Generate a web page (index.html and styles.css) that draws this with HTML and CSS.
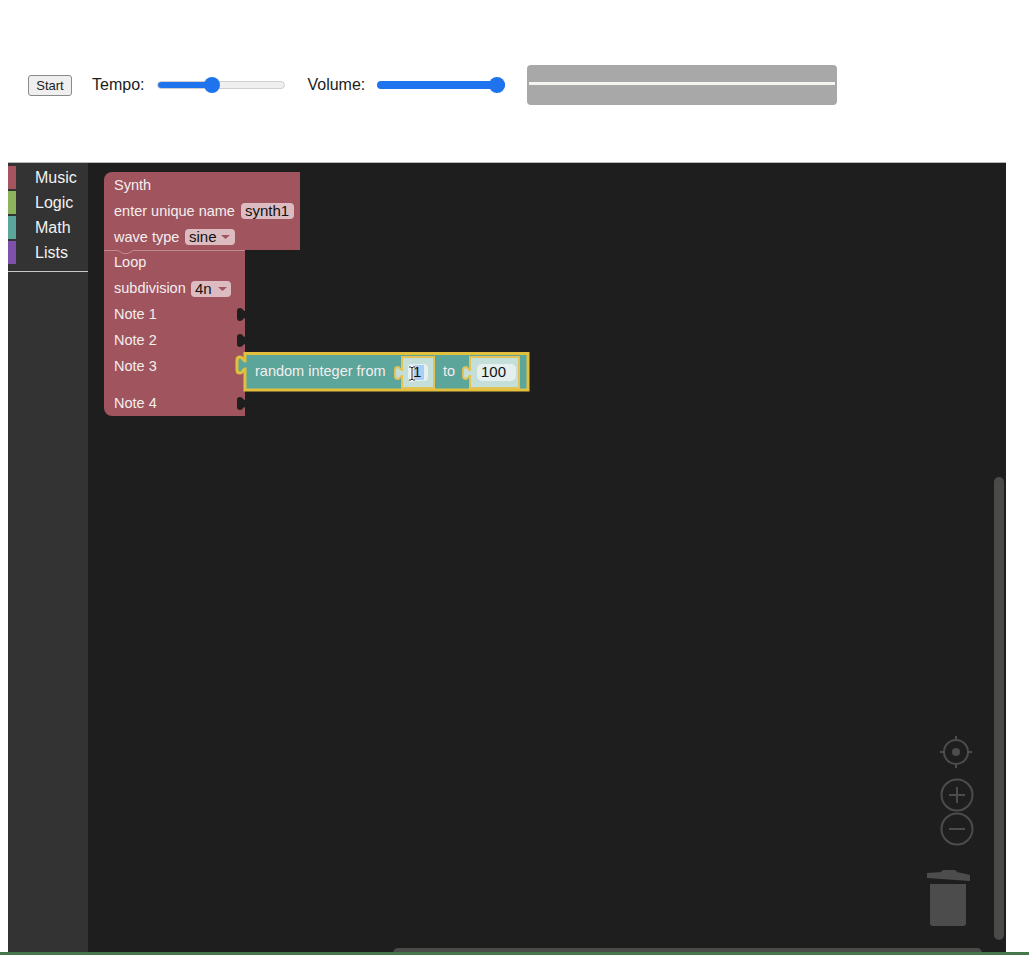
FILE: index.html
```html
<!DOCTYPE html>
<html lang="en">
<head>
    <meta charset="UTF-8">
    <meta name="viewport" content="width=device-width, initial-scale=1.0">
    <title>Music Blocks</title>
    <link rel="stylesheet" href="styles.css">
</head>
<body>
    <div class="controls">
        <button class="start">Start</button>
        <label class="control-label tempo-label" for="tempo">Tempo:</label>
        <input class="slider tempo-slider" type="range" id="tempo" value="41" min="0" max="100">
        <label class="control-label volume-label" for="volume">Volume:</label>
        <input class="slider volume-slider" type="range" id="volume" value="100" min="0" max="100">
        <div class="scope"><div class="scope-line"></div></div>
    </div>

    <div class="workspace">
        <div class="toolbox">
            <div class="category"><span class="swatch music"></span>Music</div>
            <div class="category"><span class="swatch logic"></span>Logic</div>
            <div class="category"><span class="swatch math"></span>Math</div>
            <div class="category"><span class="swatch lists"></span>Lists</div>
            <div class="separator"></div>
        </div>

        <!-- viewBox uses page coordinates so the blocks are easy to line up -->
        <svg class="canvas" viewBox="88 163 918 789">
            <!-- Synth block -->
            <path class="block-music" d="M104 180a8 8 0 0 1 8-8H300V250H104Z"/>
            <text class="block-text" x="114" y="190">Synth</text>
            <text class="block-text" x="114" y="216">enter unique name</text>
            <rect class="field-music" x="241" y="203" width="53" height="16" rx="4"/>
            <text class="field-text" x="245" y="216">synth1</text>
            <text class="block-text" x="114" y="242">wave type</text>
            <rect class="field-music" x="185" y="229" width="50" height="16" rx="4"/>
            <text class="field-text" x="189" y="242">sine</text>
            <path class="arrow" d="M221 235h9l-4.500 4Z"/>

            <!-- Loop block -->
            <path class="block-music" d="M104 250H245V416H112a8 8 0 0 1-8-8Z"/>
            <path class="block-edge" d="M104 250.500H118l5 3h5l5-3H245"/>
            <text class="block-text" x="114" y="267">Loop</text>
            <text class="block-text" x="114" y="293">subdivision</text>
            <rect class="field-music" x="191" y="281" width="40" height="16" rx="4"/>
            <text class="field-text" x="195" y="294">4n</text>
            <path class="arrow" d="M218 287h9l-4.500 4Z"/>
            <text class="block-text" x="114" y="319">Note 1</text>
            <text class="block-text" x="114" y="345">Note 2</text>
            <text class="block-text" x="114" y="371">Note 3</text>
            <text class="block-text" x="114" y="408">Note 4</text>
            <path class="tab-shadow" d="M245 311C243 311 243 308 240 308Q237 308 237 311V318Q237 321 240 321C243 321 243 318 245 318Z"/>
            <path class="tab-shadow" d="M245 337C243 337 243 334 240 334Q237 334 237 337V344Q237 347 240 347C243 347 243 344 245 344Z"/>
            <path class="tab-shadow" d="M245 400C243 400 243 397 240 397Q237 397 237 400V407Q237 410 240 410C243 410 243 407 245 407Z"/>

            <!-- random integer block, selected -->
            <path class="block-math" d="M245 353.500H528V390H245V369C243 369 243 373 240 373Q237 373 237 370V360Q237 357 240 357C243 357 243 361 245 361Z"/>
            <text class="block-text" x="255" y="376">random integer from</text>
            <text class="block-text" x="443" y="376">to</text>

            <path class="input-math" d="M402 357H434V388H402V376C400 376 400 379 398 379Q395 379 395 376V370Q395 367 398 367C400 367 400 370 402 370Z"/>
            <rect class="field-math" x="408" y="364" width="20" height="17" rx="4"/>
            <rect class="selection" x="412" y="365" width="12" height="15"/>
            <text class="field-text" x="413" y="377">1</text>
            <path class="ibeam-halo" d="M409 367h2l1 1 1-1h2M412 368v11M409 380h2l1-1 1 1h2"/>
            <path class="ibeam" d="M409 367h2l1 1 1-1h2M412 368v11M409 380h2l1-1 1 1h2"/>

            <path class="input-math" d="M470 357H519V388H470V376C468 376 468 379 466 379Q463 379 463 376V370Q463 367 466 367C468 367 468 370 470 370Z"/>
            <rect class="field-math" x="477" y="364" width="39" height="17" rx="5"/>
            <text class="field-text" x="481" y="377">100</text>

            <!-- workspace controls -->
            <circle class="control-stroke" cx="956" cy="752" r="12"/>
            <circle class="control-fill" cx="956" cy="752" r="4"/>
            <path class="control-stroke" d="M956 736v5M956 763v5M940 752h5M967 752h5"/>
            <circle class="control-stroke" cx="957" cy="795" r="15.500"/>
            <path class="control-stroke" d="M949 795h16M957 787v16"/>
            <circle class="control-stroke" cx="957" cy="829" r="15.500"/>
            <path class="control-stroke" d="M949 829h16"/>
            <path class="control-fill" d="M927 873 941 872a3 3 0 0 1 3-2h10a3 3 0 0 1 3 2L970 875V881L927 878Z"/>
            <path class="control-fill" d="M930 884H966V923a3 3 0 0 1-3 3H933a3 3 0 0 1-3-3Z"/>

            <!-- scrollbars -->
            <rect class="scrollbar" x="994" y="477" width="10" height="463" rx="5"/>
            <rect class="scrollbar" x="393" y="948" width="589" height="10" rx="5"/>
        </svg>
    </div>

    <div class="footer-bar"></div>
</body>
</html>
```

FILE: styles.css
```css
html, body {
    margin: 0;
    height: 955px;
    overflow: hidden;
    background-color: #ffffff;
    font-family: "Liberation Sans", Arial, sans-serif;
}
.controls {
    display: flex;
    align-items: center;
    height: 162px;
    padding: 8px 0 0 28px;
    box-sizing: border-box;
    color: #1c1c1c;
    font-size: 16px;
}
.start {
    width: 44px;
    height: 21px;
    padding: 0;
    background-color: #efefef;
    border: 1px solid #8a8a8a;
    border-radius: 3px;
    color: #1c1c1c;
    font-family: inherit;
    font-size: 13px;
}
.tempo-label {
    margin-left: 20px;
}
.volume-label {
    margin-left: 22px;
}
.slider {
    -webkit-appearance: none;
    appearance: none;
    width: 128px;
    height: 8px;
    margin: 0 0 0 12px;
    border: 1px solid #d0d0d0;
    border-radius: 4px;
    box-sizing: border-box;
    background-color: #efefef;
}
.tempo-slider {
    background-image: linear-gradient(#1f74ee, #1f74ee);
    background-size: 42% 100%;
    background-repeat: no-repeat;
    margin-left: 13px;
}
.volume-slider {
    background-color: #1f74ee;
    border: none;
}
.slider::-webkit-slider-thumb {
    -webkit-appearance: none;
    appearance: none;
    width: 16px;
    height: 16px;
    border-radius: 50%;
    background-color: #1f74ee;
}
.scope {
    display: flex;
    align-items: center;
    width: 310px;
    height: 40px;
    margin: 0 0 0 22px;
    padding: 0 2px 3px;
    box-sizing: border-box;
    background-color: #a9a8a8;
    border-radius: 4px;
}
.scope-line {
    width: 100%;
    height: 3px;
    background-color: #f6f4f1;
}
.workspace {
    display: flex;
    width: 998px;
    height: 790px;
    margin-left: 8px;
    border-top: 1px solid #b8b8b8;
    box-sizing: border-box;
    background-color: #1e1e1e;
}
.toolbox {
    width: 80px;
    flex-shrink: 0;
    padding-top: 2px;
    background-color: #333333;
    color: #f2f2f2;
    font-size: 16px;
}
.category {
    display: flex;
    align-items: center;
    height: 25px;
}
.swatch {
    width: 8px;
    height: 23px;
    margin-right: 19px;
}
.music {
    background-color: #a5555f;
}
.logic {
    background-color: #8eb35f;
}
.math {
    background-color: #5ba59a;
}
.lists {
    background-color: #7d52a8;
}
.separator {
    margin-top: 6px;
    border-bottom: 1px solid #c8c8c8;
}
.canvas {
    display: block;
    width: 918px;
    height: 789px;
}
.block-music {
    fill: #a0545e;
}
.block-edge {
    fill: none;
    stroke: #bd8a90;
    stroke-width: 1;
}
.block-math {
    fill: #5ba59a;
    stroke: #e3bf3e;
    stroke-width: 3;
}
.input-math {
    fill: #c4dfda;
    stroke: #e3c355;
    stroke-width: 2;
}
.block-text {
    fill: #f4eeee;
    font-size: 14.5px;
}
.field-text {
    fill: #111111;
    font-size: 15px;
}
.field-music {
    fill: #dcbcc0;
}
.field-math {
    fill: #e4f0ee;
}
.selection {
    fill: #a9cdf4;
}
.ibeam {
    fill: none;
    stroke: #222222;
    stroke-width: 1;
}
.ibeam-halo {
    fill: none;
    stroke: #ffffff;
    stroke-width: 3;
}
.arrow {
    fill: #a0545e;
}
.tab-shadow {
    fill: #1e1e1e;
}
.control-stroke {
    fill: none;
    stroke: #4c4c4c;
    stroke-width: 2;
}
.control-fill {
    fill: #4c4c4c;
}
.scrollbar {
    fill: #4a4a48;
}
.footer-bar {
    height: 3px;
    background-color: #47784d;
}
```
